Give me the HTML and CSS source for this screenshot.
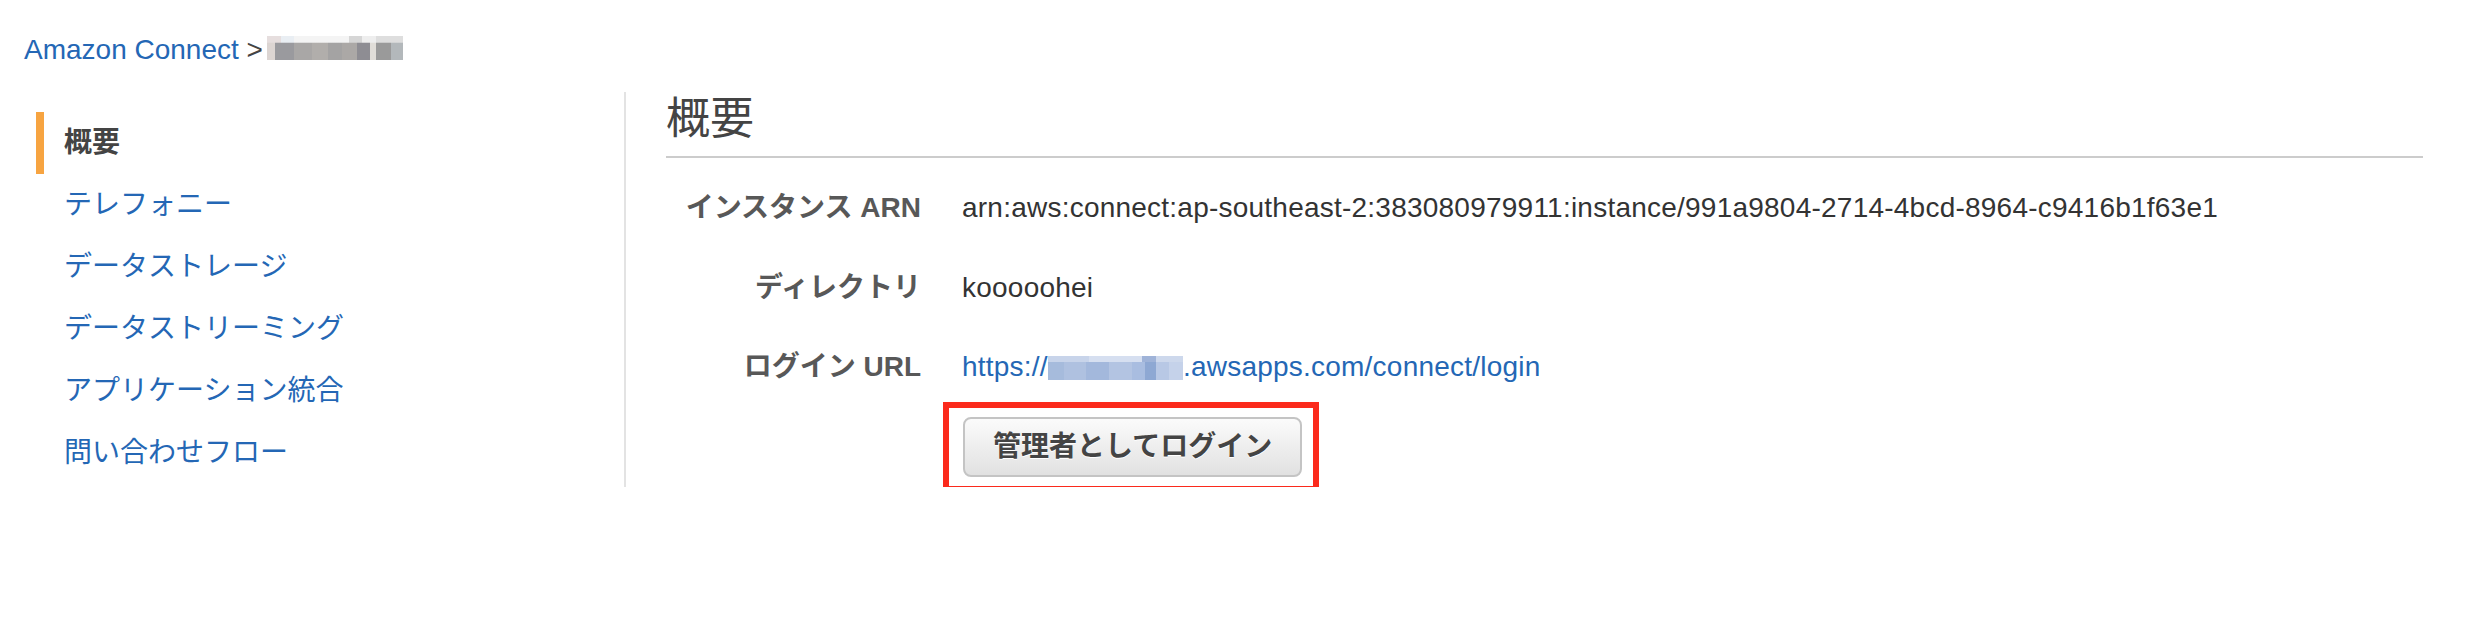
FILE: index.html
```html
<!DOCTYPE html>
<html lang="ja">
<head>
<meta charset="utf-8">
<title>Amazon Connect</title>
<link rel="stylesheet" href="styles.css">
</head>
<body>
<div class="breadcrumb">
  <a class="crumb-link" href="#">Amazon Connect</a><span class="crumb-sep"> &gt;</span><span class="mosaic mosaic-gray"></span>
</div>
<div class="layout">
  <nav class="sidebar">
    <ul class="nav">
      <li class="nav-item active">概要</li>
      <li class="nav-item"><a href="#">テレフォニー</a></li>
      <li class="nav-item"><a href="#">データストレージ</a></li>
      <li class="nav-item"><a href="#">データストリーミング</a></li>
      <li class="nav-item"><a href="#">アプリケーション統合</a></li>
      <li class="nav-item"><a href="#">問い合わせフロー</a></li>
    </ul>
  </nav>
  <main class="content">
    <h1 class="title">概要</h1>
    <dl class="details">
      <dt>インスタンス ARN</dt>
      <dd>arn:aws:connect:ap-southeast-2:383080979911:instance/991a9804-2714-4bcd-8964-c9416b1f63e1</dd>
      <dt>ディレクトリ</dt>
      <dd>kooooohei</dd>
      <dt>ログイン URL</dt>
      <dd><a href="#">https://<span class="mosaic mosaic-blue"></span>.awsapps.com/connect/login</a></dd>
    </dl>
    <div class="actions">
      <span class="btn-wrap">
        <button class="btn" type="button">管理者としてログイン</button>
        <span class="annotation"></span>
      </span>
    </div>
  </main>
</div>
</body>
</html>
```

FILE: styles.css
```css
html, body {
  margin: 0;
  padding: 0;
  background: #ffffff;
}

body {
  font-family: "Liberation Sans", "Noto Sans CJK JP", sans-serif;
  font-size: 28px;
  line-height: 32px;
  color: #333333;
}

a {
  color: #2467b5;
  text-decoration: none;
}

.breadcrumb {
  padding: 34px 0 0 24px;
  height: 32px;
  display: flex;
  align-items: center;
}

.crumb-sep {
  color: #444444;
  white-space: pre;
}

.mosaic {
  display: inline-block;
  vertical-align: middle;
}

.mosaic-gray {
  width: 136px;
  height: 24px;
  margin-left: 4px;
  margin-top: -4px;
  background:
    linear-gradient(to right, #e6dede 0 10%, #e9eef3 10% 20%, #f4f4f4 20% 60%, #d6d6d6 60% 70%, #eeeeee 70% 80%, #dedede 80% 100%) top / 100% 28% no-repeat,
    linear-gradient(to right, #dcd5d2 0 6%, #9a9a9e 6% 20%, #a9a7a6 20% 33%, #b1aeab 33% 45%, #a4a3a3 45% 55%, #aba8a6 55% 66%, #8e8d93 66% 76%, #e0ddd8 76% 80%, #9a9a9a 80% 91%, #b3b8bb 91% 100%);
}

.mosaic-blue {
  width: 135px;
  height: 24px;
  vertical-align: -4px;
  background:
    linear-gradient(to right, #c8d4ea 0 30%, #d6dff0 30% 70%, #9fb3d8 70% 80%, #cdd8ec 80% 100%) top / 100% 25% no-repeat,
    linear-gradient(to right, #a6bbdc 0 12%, #afc1e0 12% 28%, #a3b8dc 28% 45%, #b3c4e2 45% 62%, #a9bde0 62% 72%, #8ea8d3 72% 80%, #b8c8e5 80% 90%, #c5d2ea 90% 100%);
}

.layout {
  display: flex;
  margin-top: 26px;
}

.sidebar {
  width: 624px;
  flex: none;
  padding-top: 20px;
  box-sizing: border-box;
}

.nav {
  list-style: none;
  margin: 0;
  padding: 0 0 0 36px;
}

.nav-item {
  height: 62px;
  line-height: 62px;
  padding-left: 20px;
  border-left: 8px solid transparent;
  box-sizing: border-box;
}

.nav-item.active {
  border-left-color: #f7a441;
  font-weight: bold;
  color: #444444;
}

.content {
  flex: 1;
  border-left: 2px solid #e3e3e3;
  padding: 0 59px 10px 40px;
}

.title {
  margin: 5px 0 0;
  font-size: 44px;
  line-height: 44px;
  font-weight: normal;
  color: #444444;
  padding-bottom: 15px;
  border-bottom: 2px solid #cccccc;
}

.details {
  display: grid;
  grid-template-columns: 255px 1fr;
  column-gap: 41px;
  row-gap: 47.5px;
  margin: 34px 0 0;
}

.details dt {
  text-align: right;
  font-weight: bold;
  color: #585858;
  white-space: nowrap;
}

.details dd {
  margin: 0;
  color: #333333;
  white-space: nowrap;
  letter-spacing: 0.23px;
}

.actions {
  margin-top: 34px;
  padding-left: 297px;
}

.btn-wrap {
  position: relative;
  display: inline-block;
  vertical-align: top;
}

.btn {
  display: block;
  font-family: inherit;
  font-size: 28px;
  line-height: 32px;
  font-weight: bold;
  color: #444444;
  padding: 12px 28px;
  border: 2px solid #c4c4c4;
  border-radius: 8px;
  background: linear-gradient(to bottom, #fbfbfb, #e1e1e1);
  text-shadow: 0 1px 0 #ffffff;
  margin: 0;
}

.annotation {
  position: absolute;
  left: -20px;
  top: -15px;
  right: -17px;
  bottom: -15px;
  border: 6px solid #fb2a1c;
  box-sizing: border-box;
  pointer-events: none;
}
```
